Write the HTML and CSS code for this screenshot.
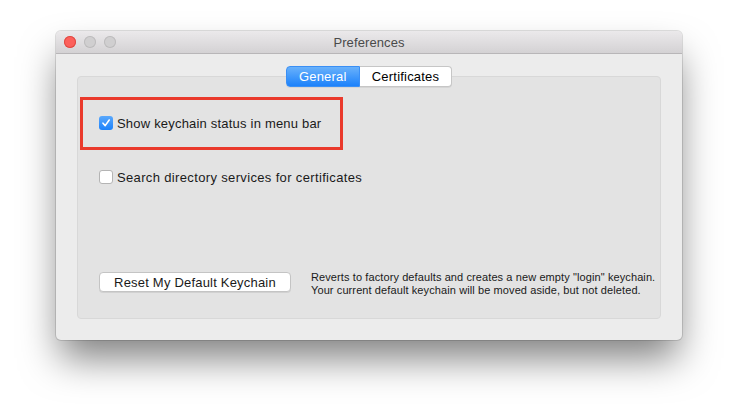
FILE: index.html
```html
<!DOCTYPE html>
<html lang="en">
<head>
    <meta charset="UTF-8">
    <title>Preferences</title>
    <link rel="stylesheet" href="styles.css">
</head>
<body>
    <div class="window">
        <div class="titlebar">
            <div class="lights">
                <span class="light close"></span>
                <span class="light"></span>
                <span class="light"></span>
            </div>
            <div class="title">Preferences</div>
        </div>
        <div class="content">
            <div class="panel">
                <div class="tabs">
                    <span class="tab active">General</span>
                    <span class="tab">Certificates</span>
                </div>
                <div class="highlight">
                    <label class="check-row">
                        <span class="checkbox checked">
                            <svg width="10" height="10" viewBox="0 0 10 10"><path d="M2 5.2 L4.2 7.6 L8.2 2" fill="none" stroke="#fff" stroke-width="1.6" stroke-linecap="round" stroke-linejoin="round"/></svg>
                        </span>
                        <span>Show keychain status in menu bar</span>
                    </label>
                </div>
                <label class="check-row second">
                    <span class="checkbox"></span>
                    <span class="wide">Search directory services for certificates</span>
                </label>
                <div class="reset-row">
                    <button class="btn">Reset My Default Keychain</button>
                    <p class="note">Reverts to factory defaults and creates a new empty "login" keychain.<br>Your current default keychain will be moved aside, but not deleted.</p>
                </div>
            </div>
        </div>
    </div>
</body>
</html>
```

FILE: styles.css
```css
html, body {
    height: 420px;
}
body {
    margin: 0;
    padding: 31px 0 0 56px;
    box-sizing: border-box;
    background-color: #fff;
    font-family: "Liberation Sans", Arial, sans-serif;
    font-size: 13px;
    letter-spacing: 0.2px;
    color: #1a1a1a;
}
.window {
    width: 626px;
    height: 309px;
    background-color: #ececec;
    border-radius: 5px;
    box-shadow: 0 0 0 1px rgba(0,0,0,0.12), 0 22px 38px -4px rgba(0,0,0,0.5);
    display: flex;
    flex-direction: column;
    overflow: hidden;
}
.titlebar {
    height: 22px;
    flex: none;
    display: flex;
    align-items: center;
    background: linear-gradient(#ebe9eb, #d4d2d4);
    border-bottom: 1px solid #b8b6b8;
}
.lights {
    display: flex;
    gap: 8px;
    padding-left: 8px;
    width: 100px;
    box-sizing: border-box;
}
.light {
    width: 12px;
    height: 12px;
    border-radius: 50%;
    background-color: #d0cfd0;
    box-shadow: inset 0 0 0 1px #bdbcbd;
}
.light.close {
    background-color: #fc605b;
    box-shadow: inset 0 0 0 1px #de4a43;
}
.title {
    flex: 1;
    text-align: center;
    color: #4a4a4a;
    padding-right: 100px;
    letter-spacing: 0.1px;
}
.content {
    flex: 1;
    padding: 22px 21px 21px 21px;
    display: flex;
}
.panel {
    flex: 1;
    background-color: #e3e3e3;
    border: 1px solid #d8d8d8;
    border-radius: 4px;
    display: flex;
    flex-direction: column;
    padding-bottom: 26px;
}
.tabs {
    display: flex;
    justify-content: center;
    margin-top: -11px;
    height: 21px;
}
.tab {
    height: 21px;
    box-sizing: border-box;
    padding: 0 12px 0 12px;
    line-height: 19px;
    background-color: #fff;
    border: 1px solid #c6c6c6;
    border-left: none;
    border-radius: 0 4px 4px 0;
    color: #000;
    box-shadow: 0 1px 0 rgba(0,0,0,0.06);
}
.tab.active {
    width: 74px;
    text-align: center;
    padding: 0;
    border: 1px solid #3a8ff5;
    border-radius: 4px 0 0 4px;
    background: linear-gradient(#69b1fb, #1c82fb);
    color: #fff;
}
.highlight {
    width: 263px;
    height: 53px;
    box-sizing: border-box;
    margin: 10px 0 0 2px;
    border: 3px solid #ea3a2c;
    padding: 16px 0 0 16px;
}
.check-row {
    display: flex;
    align-items: center;
    gap: 4px;
    height: 14px;
}
.check-row.second {
    margin: 20px 0 0 21px;
}
.wide {
    letter-spacing: 0.35px;
}
.checkbox {
    width: 14px;
    height: 14px;
    box-sizing: border-box;
    border-radius: 3px;
    background-color: #fff;
    border: 1px solid #b4b4b4;
    display: flex;
    align-items: center;
    justify-content: center;
}
.checkbox.checked {
    border: none;
    background: linear-gradient(#5aa8fc, #1c82fb);
}
.reset-row {
    margin: auto 0 0 21px;
    display: flex;
    align-items: flex-start;
    gap: 20px;
    height: 20px;
}
.btn {
    width: 192px;
    height: 20px;
    flex: none;
    background-color: #fff;
    border: 1px solid #c4c4c4;
    border-radius: 4px;
    box-shadow: 0 1px 0 rgba(0,0,0,0.08);
    font-family: inherit;
    font-size: 13px;
    letter-spacing: 0.2px;
    color: #1a1a1a;
    padding: 0;
}
.note {
    margin: -1px 0 0 0;
    font-size: 11px;
    line-height: 13px;
    letter-spacing: 0.1px;
    color: #1a1a1a;
}
```
